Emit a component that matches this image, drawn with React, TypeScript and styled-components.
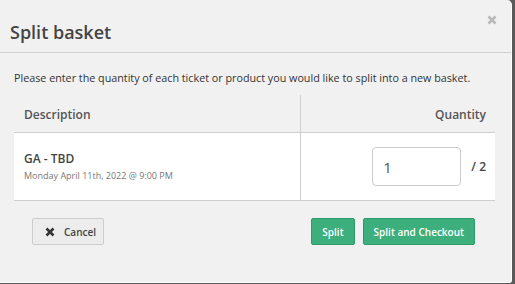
import type { FC } from 'react'
import { styled, createGlobalStyle } from 'styled-components'

const GlobalStyle = createGlobalStyle`
  html, body {
    margin: 0;
    padding: 0;
    background: #5a5a5a;
    font-family: 'Open Sans', 'Noto Sans', sans-serif;
  }
`

const Page = styled.div`
  width: 515px;
  height: 284px;
  overflow: hidden;
`

const Modal = styled.div`
  box-sizing: border-box;
  width: 518px;
  height: 283px;
  margin-left: -6px;
  padding-left: 6px;
  background: #f1f1f1;
  border-right: 1px solid #ffffff;
  border-bottom: 1px solid #ffffff;
  border-radius: 0 5px 3px 0;
  display: flex;
  flex-direction: column;
`

const Header = styled.div`
  height: 53px;
  box-sizing: border-box;
  border-bottom: 1px solid #cfcfcf;
  display: flex;
  justify-content: space-between;
  align-items: flex-start;
  padding: 0 14px 0 10px;
`

const Title = styled.h3`
  margin: 21px 0 0;
  font-size: 18px;
  line-height: 22px;
  font-weight: 600;
  color: #444;
`

const Close = styled.span`
  margin-top: 15px;
  display: flex;
`

const Body = styled.div`
  padding: 0 16px 0 14px;
`

const Intro = styled.p`
  margin: 18px 0 0;
  font-size: 10.75px;
  line-height: 14px;
  color: #333;
`

const Table = styled.div`
  margin-top: 10px;
  display: grid;
  grid-template-columns: 287px 1fr;
  border-bottom: 1px solid #cfcfcf;
`

const HeadCell = styled.div<{ $right?: boolean }>`
  height: 38px;
  box-sizing: border-box;
  border-bottom: 1px solid #cfcfcf;
  border-right: ${(p) => (p.$right ? 'none' : '1px solid #cfcfcf')};
  display: flex;
  align-items: center;
  justify-content: ${(p) => (p.$right ? 'flex-end' : 'flex-start')};
  padding: 2px 9px 0 10px;
  font-size: 12px;
  font-weight: 600;
  color: #555;
`

const Cell = styled.div<{ $right?: boolean }>`
  height: 67px;
  box-sizing: border-box;
  background: #fff;
  border-right: ${(p) => (p.$right ? 'none' : '1px solid #cfcfcf')};
  display: flex;
  flex-direction: ${(p) => (p.$right ? 'row' : 'column')};
  justify-content: ${(p) => (p.$right ? 'flex-end' : 'center')};
  align-items: ${(p) => (p.$right ? 'center' : 'flex-start')};
  padding: 0 9px 0 10px;
`

const ItemName = styled.div`
  font-size: 12px;
  line-height: 16px;
  font-weight: 600;
  color: #444;
`

const ItemDate = styled.div`
  font-size: 9px;
  line-height: 14px;
  color: #777;
  margin-top: 2px;
`

const QtyInput = styled.input`
  box-sizing: border-box;
  width: 89px;
  height: 39px;
  border: 1px solid #ccc;
  border-radius: 4px;
  padding: 0 10px;
  font-family: 'Open Sans', sans-serif;
  font-size: 15px;
  color: #555;
  background: #fff;
  outline: none;
`

const Max = styled.span`
  margin-left: 10px;
  font-size: 12px;
  font-weight: 600;
  color: #444;
`

const Footer = styled.div`
  display: flex;
  justify-content: space-between;
  align-items: center;
  padding: 17px 36px 0 32px;
`

const Group = styled.div`
  display: flex;
  gap: 8px;
`

const Button = styled.button<{ $green?: boolean }>`
  box-sizing: border-box;
  height: 27px;
  padding: 0 ${(p) => (p.$green ? '10px' : '12px')};
  border-radius: 2px;
  border: 1px solid ${(p) => (p.$green ? '#2f9a69' : '#cdcdcd')};
  background: ${(p) => (p.$green ? '#3daf7c' : '#ececec')};
  color: ${(p) => (p.$green ? '#fff' : '#444')};
  font-family: 'Open Sans', sans-serif;
  font-size: 10px;
  font-weight: 600;
  display: flex;
  align-items: center;
  gap: 9px;

  svg {
    flex-shrink: 0;
  }
`

const XIcon: FC<{ color: string; size: number }> = ({ color, size }) => (
  <svg width={size} height={size} viewBox="0 0 10 10">
    <path d="M1.5 1.5 L8.5 8.5 M8.5 1.5 L1.5 8.5" stroke={color} strokeWidth="2.6" />
  </svg>
)

const App: FC = () => {
  return (
    <>
      <GlobalStyle />
      <Page>
        <Modal>
          <Header>
            <Title>Split basket</Title>
            <Close>
              <XIcon color="#b9b9b9" size={10} />
            </Close>
          </Header>
          <Body>
            <Intro>
              Please enter the quantity of each ticket or product you would like to split into a new basket.
            </Intro>
            <Table>
              <HeadCell>Description</HeadCell>
              <HeadCell $right>Quantity</HeadCell>
              <Cell>
                <ItemName>GA - TBD</ItemName>
                <ItemDate>Monday April 11th, 2022 @ 9:00 PM</ItemDate>
              </Cell>
              <Cell $right>
                <QtyInput defaultValue="1" />
                <Max>/ 2</Max>
              </Cell>
            </Table>
          </Body>
          <Footer>
            <Button style={{ width: 72 }}>
              <XIcon color="#333" size={10} />
              Cancel
            </Button>
            <Group>
              <Button $green>Split</Button>
              <Button $green>Split and Checkout</Button>
            </Group>
          </Footer>
        </Modal>
      </Page>
    </>
  )
}

export default App
